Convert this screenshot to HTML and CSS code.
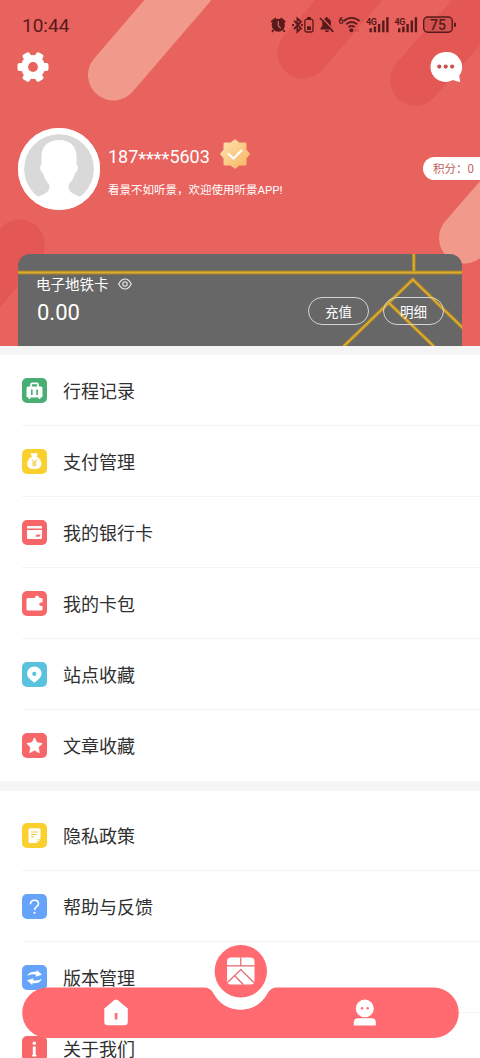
FILE: index.html
```html
<!DOCTYPE html>
<html lang="zh-CN">
<head>
<meta charset="utf-8">
<title>我的</title>
<link rel="stylesheet" href="styles.css">
</head>
<body>
<div class="screen">
  <header class="hero">
    <svg class="hero-art" viewBox="0 0 480 346" aria-hidden="true">
      <g fill="none" stroke-linecap="round">
        <g stroke="#f19a8b" stroke-width="51">
          <path d="M113.500 75L190-14"/>
          <path d="M464.500 238L520 174"/>
        </g>
        <g stroke="#e35855" stroke-width="51">
          <path d="M303 53L375-30"/>
          <path d="M415.500 80L500-16"/>
          <path d="M19.500 245L-50 327"/>
        </g>
      </g>
    </svg>
    <div class="status">
      <time class="clock">10:44</time>
      <svg class="status-icons" viewBox="264 10 200 30" aria-label="状态">
        <g fill="#571b1b" stroke="none">
          <circle cx="278.300" cy="25.200" r="6.500"/>
          <path d="M280.500 18.300l4.800 3.700M276 18.300l-4.800 3.700" stroke="#571b1b" stroke-width="1.800"/>
          <path d="M273.500 30l-1.500 1.800M283.200 30l1.500 1.800" stroke="#571b1b" stroke-width="1.800"/>
          <path d="M278.300 21v4.600l2.400 2.700" fill="none" stroke="#e8625e" stroke-width="1.200"/>
          <path d="M294 20.500l7 8-3.600 3.300V18.500l3.600 3.300-7 7.200M292 25h2M301 25h1.800" fill="none" stroke="#571b1b" stroke-width="1.800"/>
          <rect x="304.800" y="19.300" width="8.200" height="12.700" rx="1.800" fill="none" stroke="#571b1b" stroke-width="1.300"/>
          <path d="M307 17h4v2h-4zM307 26.200h4v3.800h-4z"/>
          <path d="M320.500 29.500v-1.200l1.800-2.300v-3.700c0-2 1.400-3.700 3.400-4.100V17h1.800v1.200c2 .5 3.500 2.100 3.500 4.100v3.700l2 2.300v1.200zM325 30.300h4a2 2 0 0 1-4 0z"/>
          <path d="M320.700 16.800l13.500 13.700" stroke="#e65e5a" stroke-width="1.500"/>
          <path d="M320 18l13.300 13.800" stroke="#571b1b" stroke-width="1.700"/>
          <text x="338.500" y="23.800" class="tiny-six">6</text>
          <path d="M343.700 21.200a11 11 0 0 1 15.800 0M346.200 24.300a7.500 7.500 0 0 1 10.800 0M348.600 27.200a4.300 4.300 0 0 1 6 0" fill="none" stroke="#571b1b" stroke-width="1.900"/>
          <circle cx="351.400" cy="30.300" r="2"/>
          <path d="M355.500 29v3M358 29v3" stroke="#c24c49" stroke-width="1.200"/>
          <text x="366" y="24.500" class="tiny-net">4G</text>
          <text x="394.500" y="24.500" class="tiny-net">4G</text>
          <path id="bars" d="M369.500 28.200h2.400v4h-2.400zM373.700 26.600h2.400v5.600h-2.400zM377.900 24h2.400v8.200h-2.400zM382.100 20.500h2.400v11.700h-2.400zM386.200 17.200h2.400v15h-2.400z"/>
          <use href="#bars" x="28.500"/>
          <rect x="423.700" y="17" width="28.600" height="15.300" rx="4" fill="#d4524f" stroke="#571b1b" stroke-width="1.400"/>
          <rect x="454" y="22.500" width="2" height="4.500" rx="1"/>
          <text x="438" y="29.800" class="battery">75</text>
        </g>
      </svg>
    </div>
    <div class="toolbar">
      <svg class="gear" viewBox="-16 -16 32 32" aria-label="设置">
        <g fill="#fff">
          <circle r="12"/>
          <g id="teeth"><rect x="-15.500" y="-4" width="31" height="8" rx="2"/></g>
          <use href="#teeth" transform="rotate(60)"/>
          <use href="#teeth" transform="rotate(120)"/>
        </g>
        <circle r="4.900" fill="#e8625e"/>
      </svg>
      <svg class="chat" viewBox="0 0 32 32" aria-label="消息">
        <path d="M15.500 1a15 15 0 1 0 7.500 28q3.500 1.800 7.200 1.900l-1-6.200A15 15 0 0 0 15.500 1z" fill="#fff"/>
        <g fill="#c9504d"><circle cx="9.300" cy="15.600" r="2.100"/><circle cx="15.700" cy="15.600" r="2.100"/><circle cx="22.100" cy="15.600" r="2.100"/></g>
      </svg>
    </div>
    <div class="profile">
      <svg class="avatar" viewBox="0 0 82 82" aria-label="头像">
        <circle cx="41" cy="41" r="41" fill="#fff"/>
        <circle cx="41" cy="41" r="35" fill="#d9d9d9"/>
        <path d="M41 12c11 0 17.500 6.500 17.500 16v9c2.500.5 1.500 7-1.500 8-1.500 6-4 9-6 11-1.500 6 1 9 11 12.500v4A40 40 0 0 1 20 72.500v-4c10-3.500 12.500-6.500 11-12.500-2-2-4.500-5-6-11-3-1-4-7.500-1.500-8v-9c0-9.500 6.500-16 17.500-16z" fill="#fff"/>
        <circle cx="41" cy="41" r="38" fill="none" stroke="#fff" stroke-width="6"/>
      </svg>
      <div class="who">
        <div class="phone-line">
          <span class="phone">187<span class="mask">****</span>5603</span>
          <svg class="badge" viewBox="-16 -16 32 32" aria-label="已认证">
            <defs><linearGradient id="gold" x1="0" y1="0" x2="1" y2="1"><stop offset="0" stop-color="#ffe3b0"/><stop offset="1" stop-color="#f9b45f"/></linearGradient></defs>
            <path d="M0-14.300L4.500-11h6Q11-11 11-10.500V-4.500l3.500 4.500L11 4.500v6q0 .5-.5.500h-6L0 14.300-4.500 11h-6q-.5 0-.5-.5v-6L-14.500 0-11-4.500v-6q0-.5.500-.5h6z" fill="url(#gold)" stroke="url(#gold)" stroke-linejoin="round"/>
            <path d="M-7-.5l5.500 5 8.500-8.500" fill="none" stroke="#fff" stroke-width="2.200"/>
          </svg>
        </div>
        <p class="welcome">看景不如听景，欢迎使用听景<span class="latin">APP!</span></p>
      </div>
      <div class="points">积分：0</div>
    </div>
    <section class="card">
      <svg class="card-art" viewBox="0 0 444 92" aria-hidden="true">
        <g fill="none">
          <path d="M0 18.500h444M395.800 0v17M325.500 92.500L394.800 25.500l60 58M371 49l45 43.500" stroke="#a5832a" stroke-width="3.800"/>
          <path d="M0 18.500h444M395.800 0v17M325.500 92.500L394.800 25.500l60 58M371 49l45 43.500" stroke="#dcab31" stroke-width="1.900"/>
        </g>
      </svg>
      <div class="balance">
        <div class="card-name">电子地铁卡
          <svg class="eye" viewBox="0 0 14 12"><g fill="none" stroke="#eee" stroke-width="1.100"><path d="M.7 6Q3.300 1 7 1t6.300 5Q10.700 11 7 11T.7 6z"/><circle cx="7" cy="6" r="2.200"/></g></svg>
        </div>
        <div class="amount">0.00</div>
      </div>
      <div class="actions">
        <button class="pill">充值</button>
        <button class="pill">明细</button>
      </div>
    </section>
  </header>

  <ul class="menu">
    <li class="item"><svg class="ico green" viewBox="0 0 25 25"><rect x="4.500" y="8.500" width="16" height="11" rx="1.500" fill="#fff"/><path d="M9 9V6.500Q9 5.300 10.200 5.300h4.600q1.200 0 1.200 1.200V9M7.500 19v2M17.500 19v2" fill="none" stroke="#fff" stroke-width="1.700"/><path d="M9.800 11.500v5.500M15.200 11.500v5.500" stroke="#4caf78" stroke-width="1.700"/></svg><span>行程记录</span></li>
    <li class="item"><svg class="ico yellow" viewBox="0 0 25 25"><path d="M8.500 4.300h7.500l-1.500 3.200q5 3 5 7.500 0 5-7.200 5T5.100 15q0-4.500 5-7.500z" fill="#fff"/><path d="M9.800 10.500l2.500 3 2.500-3M12.300 13.500v4.300M9.800 14h5M9.800 16h5" fill="none" stroke="#f6cb45" stroke-width="1.100"/></svg><span>支付管理</span></li>
    <li class="item"><svg class="ico red" viewBox="0 0 25 25"><path d="M5 8.500V7q0-1 1-1h13q1 0 1 1v1.500zM5 10h15v8q0 1-1 1H6q-1 0-1-1z" fill="#fff"/><path d="M14.500 14.500h4l-1 2.200h-4z" fill="#f46b6d"/></svg><span>我的银行卡</span></li>
    <li class="item"><svg class="ico red" viewBox="0 0 25 25"><path d="M6 7h6.500q.5-1.800 2.500-2.500 2 0 2.500 2.500h2q1 0 1 1v10.500q0 1-1 1H6q-1.500 0-1.500-1.500V8.500Q4.500 7 6 7z" fill="#fff"/><path d="M21 11.500h-2a1.700 1.700 0 0 0 0 3.400h2z" fill="#f46b6d"/></svg><span>我的卡包</span></li>
    <li class="item"><svg class="ico cyan" viewBox="0 0 25 25"><path d="M12.300 4.500a7.300 7.300 0 0 1 7.300 7.200q0 4-7.300 9-7.300-5-7.300-9a7.300 7.300 0 0 1 7.300-7.200z" fill="#fff"/><circle cx="12.300" cy="11.900" r="2.100" fill="#5bc2dd"/></svg><span>站点收藏</span></li>
    <li class="item"><svg class="ico red" viewBox="0 0 25 25"><path d="M12.500 4.900l2.300 4.900 5.300.7-3.900 3.800 1 5.300-4.700-2.600-4.700 2.600 1-5.300-3.900-3.800 5.300-.7z" fill="#fff" stroke="#fff" stroke-linejoin="round"/></svg><span>文章收藏</span></li>
  </ul>
  <ul class="menu second">
    <li class="item"><svg class="ico yellow" viewBox="0 0 25 25"><path d="M8 5.300h9q1.500 0 1.500 1.500v8.700L14.500 20H8q-1.500 0-1.500-1.500V6.800Q6.500 5.300 8 5.300z" fill="#fff"/><path d="M9 9h7M9 11.500h6M9 14h3" stroke="#f6cb45" stroke-width="1.100"/><path d="M15.300 19.700v-3.200h3.200z" fill="#fff" stroke="#f6cb45" stroke-width=".5"/></svg><span>隐私政策</span></li>
    <li class="item"><svg class="ico blue" viewBox="0 0 25 25"><path d="M8.500 10.200q0-4 4-4t4 3.500q0 1.700-2.200 3.200-1.700 1.200-1.700 3.200" fill="none" stroke="#fff" stroke-width="1.600"/><circle cx="12.500" cy="18.800" r="1.100" fill="#fff"/></svg><span>帮助与反馈</span></li>
    <li class="item"><svg class="ico blue" viewBox="0 0 25 25"><path d="M5 11Q7.500 6 14.500 6.800L14.800 5l5.200 4.800-6.500 2 .6-2Q9 8.500 5 11zM20 13.800Q17.500 19.200 10.500 18.200L10.200 20 5 15.200l6.500-2-.6 2Q16 16.300 20 13.800z" fill="#fff"/></svg><span>版本管理</span></li>
    <li class="item"><svg class="ico red" viewBox="0 0 25 25"><circle cx="12.300" cy="7.300" r="1.700" fill="#fff"/><path d="M10.800 10.500h2.900V19h.8v1.500h-4.400V19h.7z" fill="#fff"/></svg><span>关于我们</span></li>
  </ul>

  <nav class="tabbar">
    <svg viewBox="0 0 437 96" aria-label="导航">
      <path d="M25.500 44.500H183q5.500 0 9 6.500c6 10 15 15.500 26.500 15.500S239 61 245 51q3.500-6.500 9-6.500h157.500a25.250 25.250 0 0 1 0 50.500h-386a25.250 25.250 0 0 1 0-50.500z" fill="#ff6b70"/>
      <path d="M183 43.500q5.500 0 9 7.500c6 10.500 15 15.500 26.500 15.500S239 61.500 245 51q3.500-7.500 9-7.500z" fill="#fff"/>
      <circle cx="218.800" cy="28.300" r="26.200" fill="#ff6b70"/>
      <rect x="205" y="14.500" width="27.500" height="27" rx="4" fill="#fff"/>
      <path d="M205 22.800h27.500M218.800 14.500v8.300M205.500 39.500l13.300-13 13 13M213 33l8.300 8.500" fill="none" stroke="#e26468" stroke-width="1.200"/>
      <path d="M82.300 65.500L92.200 57.200q1.800-1.400 3.600 0l10 8.300V79q0 3.300-3.500 3.300h-16.500Q82.300 82.300 82.300 79z" fill="#fff"/>
      <rect x="92.800" y="70" width="2.600" height="6.500" fill="#ff6b70"/>
      <circle cx="342.800" cy="65.500" r="9" fill="#fff"/>
      <path d="M331.800 82.500V79.500q0-4.500 4.500-4.500h13q4.500 0 4.500 4.500v3z" fill="#fff"/>
      <path d="M334 74.800h17.500" stroke="#ff6b70" stroke-width=".7"/>
      <circle cx="340" cy="65.200" r="1.200" fill="#ff6b70"/><circle cx="345.700" cy="65.200" r="1.200" fill="#ff6b70"/>
    </svg>
  </nav>
</div>
</body>
</html>
```
FILE: styles.css
```css
* { box-sizing: border-box; }
body {
  margin: 0;
  font-family: "Noto Sans CJK SC", sans-serif;
  color: #303030;
}
.screen { position: relative; width: 480px; height: 1058px; overflow: hidden; background: #fff; }

.hero { position: relative; height: 346px; overflow: hidden; background: #e8625e; display: flex; flex-direction: column; }
.hero-art { position: absolute; left: 0; top: 0; width: 480px; height: 346px; }
.status, .toolbar, .profile, .card { position: relative; }

.status { height: 50px; display: flex; justify-content: space-between; padding: 10px 16px 0 22px; }
.clock { font: 19px/32px Roboto, sans-serif; color: #571b1b; }
.status-icons { width: 200px; height: 30px; }
.tiny-six { font: bold 9px Roboto, sans-serif; }
.tiny-net { font: bold 9px Roboto, sans-serif; letter-spacing: -.5px; }
.battery { font: 500 14px Roboto, sans-serif; text-anchor: middle; }

.toolbar { height: 78px; display: flex; justify-content: space-between; align-items: flex-start; padding: 1px 18px 0 17.400px; }
.gear, .chat { width: 32px; height: 32px; }

.profile { height: 126px; display: flex; align-items: flex-start; padding-left: 18px; }
.avatar { width: 82px; height: 82px; }
.who { margin-left: 8px; padding-top: 10px; }
.phone-line { display: flex; align-items: center; height: 32px; }
.phone { width: 111px; padding-top: 6px; font-family: Roboto, sans-serif; font-size: 18px; line-height: 32px; color: #fff; white-space: nowrap; }
.mask { display: inline-block; line-height: 20px; transform: translateY(2px); }
.badge { width: 32px; height: 32px; }
.welcome { margin: 9px 0 0; font-size: 11.500px; line-height: 20px; color: #fff; white-space: nowrap; }
.latin { font-family: Roboto, sans-serif; font-size: 11.500px; }
.points { margin: 29px 0 0 auto; width: 57px; height: 23px; padding-left: 10px; border-radius: 12px 0 0 12px; background: #fff; color: #c25a56; font-size: 11.500px; line-height: 23px; white-space: nowrap; }

.card { width: 444px; height: 92px; margin-left: 18px; border-radius: 12px 12px 0 0; overflow: hidden; background: #676767; color: #fff; display: flex; justify-content: space-between; padding: 20px 18px 0; }
.card-art { position: absolute; left: 0; top: 0; width: 444px; height: 92px; }
.balance, .actions { position: relative; }
.card-name { display: flex; align-items: center; gap: 9px; font-size: 14.500px; line-height: 20px; }
.eye { width: 14px; height: 12px; }
.amount { font: 22px/38px Roboto, sans-serif; padding-left: 1px; }
.actions { display: flex; gap: 14px; padding-top: 23px; }
.pill { width: 61px; height: 28px; padding: 0; border: 1px solid #d5d5d5; border-radius: 14px; background: none; color: #fff; font: 400 13.500px/26px "Noto Sans CJK SC", sans-serif; }

.menu { list-style: none; margin: 0; padding: 0; border-top: 9px solid #f5f5f5; }
.item { height: 71px; margin-left: 22px; padding-top: 1px; border-bottom: 1px solid #f4f4f4; display: flex; align-items: center; gap: 16px; font-size: 18px; line-height: 26px; }
.item span { margin-bottom: 2px; }
.menu .item:last-child { border-bottom-color: transparent; }
.menu.second { padding-top: 9px; border-top-width: 10px; }
.ico { width: 25px; height: 25px; border-radius: 5px; }
.green { background: #49ae74; }
.yellow { background: #fad02f; }
.red { background: #f76669; }
.cyan { background: #58c2df; }
.blue { background: #66a3fa; }

.tabbar { position: absolute; left: 22.300px; top: 943.300px; width: 437px; height: 96px; }
.tabbar svg { display: block; width: 437px; height: 96px; }
```
